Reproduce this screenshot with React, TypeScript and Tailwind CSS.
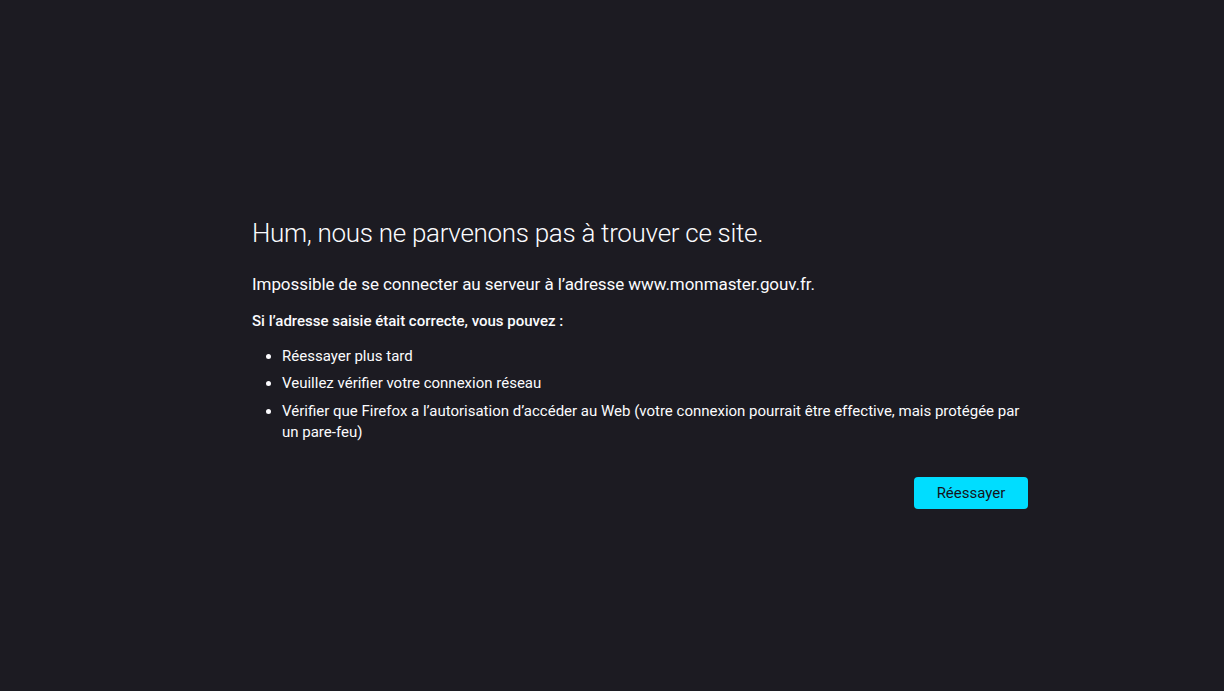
export default function App() {
  return (
    <div
      className="h-[691px] w-full bg-[#1c1b22] text-[#fbfbfe] overflow-hidden"
      style={{ fontFamily: 'Roboto, "Noto Sans", sans-serif' }}
    >
      <div className="ml-[252px] w-[776px] pt-[215px]">
        <h1 className="text-[26px] font-light leading-[36px] tracking-[-0.3px] text-[#fbfbfe]">
          Hum, nous ne parvenons pas à trouver ce site.
        </h1>
        <p className="mt-[21px] text-[17px] leading-[24px] tracking-[-0.07px]">
          Impossible de se connecter au serveur à l’adresse www.monmaster.gouv.fr.
        </p>
        <p className="mt-[14px] text-[15px] font-medium leading-[22px]">
          Si l’adresse saisie était correcte, vous pouvez :
        </p>
        <ul className="mt-[14px] pl-[30px] list-disc text-[15px] leading-[21px]">
          <li className="mb-[6px]">Réessayer plus tard</li>
          <li className="mb-[7px]">Veuillez vérifier votre connexion réseau</li>
          <li>
            Vérifier que Firefox a l’autorisation d’accéder au Web (votre connexion pourrait être
            effective, mais protégée par un pare-feu)
          </li>
        </ul>
        <div className="mt-[34px] flex justify-end">
          <button className="h-[32px] w-[114px] rounded-[4px] bg-[#00ddff] text-[15px] text-[#15141a]">
            Réessayer
          </button>
        </div>
      </div>
    </div>
  );
}
